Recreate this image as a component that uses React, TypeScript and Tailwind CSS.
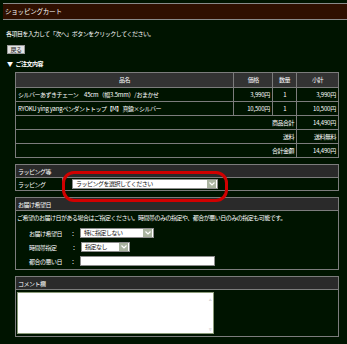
import React from "react";

const cell = "border border-[#7c7c7c] px-[2px] h-[14px] leading-none";
const num = "tracking-[-0.2px]";

function Arrow() {
    return (
        <span className="ml-auto flex h-[8px] w-[9px] items-center justify-center bg-[#aab4a0]">
            <svg width="6" height="4" viewBox="0 0 6 4">
                <path d="M0.5 0.5L3 3L5.5 0.5" fill="none" stroke="#fff" strokeWidth="1.2" />
            </svg>
        </span>
    );
}

function Select({ text, width }: { text: string; width: string }) {
    return (
        <div className={`flex h-[10px] items-center border border-[#8c8c8c] bg-white pl-[3px] pr-[1px] text-[#111] ${width}`}>
            <span className="leading-none">{text}</span>
            <Arrow />
        </div>
    );
}

function SectionHead({ title }: { title: string }) {
    return (
        <div className="flex h-[13px] items-center border-b border-[#7c7c7c] bg-[#2a2a2a] pl-[2px]">
            {title}
        </div>
    );
}

export default function App() {
    return (
        <div className="relative h-[344px] w-[347px] overflow-hidden bg-[#001400] pt-[3px] font-['Noto_Sans_CJK_JP','Noto_Sans',sans-serif] text-[6px] tracking-[-0.5px] text-white">
            {/* Title bar */}
            <div className="ml-[3px] flex h-[17px] items-center border-y border-[#8a8a8a] bg-[#2f0f00] pl-[2px] text-[6.5px] tracking-[-0.2px]">
                ショッピングカート
            </div>

            <p className="mt-[10px] h-[8px] pl-[6px] leading-[8px]">
                各項目を入力して「次へ」ボタンをクリックしてください。
            </p>

            <button className="ml-[7px] mt-[7px] flex h-[9px] w-[18px] items-center justify-center border border-[#999] bg-[#e4e4e4] text-[#111] leading-none">
                戻る
            </button>

            <div className="mt-[5px] flex h-[8px] items-center pl-[7px]">
                <span className="mr-[3px] text-[6px]">▼</span>
                <span className="font-bold">ご注文内容</span>
            </div>

            {/* Order table */}
            <table className="ml-[15px] mt-[5px] w-[324px] border-collapse border border-[#8c8c8c]">
                <colgroup>
                    <col className="w-[219px]" />
                    <col className="w-[39px]" />
                    <col className="w-[24px]" />
                    <col className="w-[42px]" />
                </colgroup>
                <thead>
                    <tr className="h-[15px] bg-[#333333]">
                        <th className={`${cell} font-normal`}>品名</th>
                        <th className={`${cell} font-normal`}>価格</th>
                        <th className={`${cell} font-normal`}>数量</th>
                        <th className={`${cell} font-normal`}>小計</th>
                    </tr>
                </thead>
                <tbody>
                    <tr>
                        <td className={`${cell} text-left`}>
                            シルバーあずきチェーン<span className={num}>　45cm（幅3.5mm）/</span>おまかせ
                        </td>
                        <td className={`${cell} text-right ${num}`}>3,990円</td>
                        <td className={`${cell} text-center`}>1</td>
                        <td className={`${cell} text-right ${num}`}>3,990円</td>
                    </tr>
                    <tr>
                        <td className={`${cell} text-left`}>
                            <span className={num}>RYOKU ying yang</span>ペンダントトップ【M】 真鍮×シルバー
                        </td>
                        <td className={`${cell} text-right ${num}`}>10,500円</td>
                        <td className={`${cell} text-center`}>1</td>
                        <td className={`${cell} text-right ${num}`}>10,500円</td>
                    </tr>
                    <tr>
                        <td colSpan={3} className={`${cell} text-right`}>商品合計</td>
                        <td className={`${cell} text-right ${num}`}>14,490円</td>
                    </tr>
                    <tr>
                        <td colSpan={3} className={`${cell} text-right`}>送料</td>
                        <td className={`${cell} text-right`}>送料無料</td>
                    </tr>
                    <tr>
                        <td colSpan={3} className={`${cell} text-right`}>合計金額</td>
                        <td className={`${cell} text-right ${num}`}>14,490円</td>
                    </tr>
                </tbody>
            </table>

            {/* Wrapping */}
            <div className="ml-[15px] mt-[6px] w-[324px] border border-[#7c7c7c]">
                <SectionHead title="ラッピング等" />
                <div className="flex h-[12px] items-center">
                    <div className="flex h-full w-[47px] items-center border-r border-[#7c7c7c] pl-[2px]">ラッピング</div>
                    <div className="ml-[9px]">
                        <Select text="ラッピングを選択してください" width="w-[146px]" />
                    </div>
                </div>
            </div>

            {/* Delivery date */}
            <div className="ml-[15px] mt-[6px] w-[324px] border border-[#7c7c7c]">
                <SectionHead title="お届け希望日" />
                <p className="mt-[3px] h-[8px] pl-[1px] leading-[8px]">
                    ご希望のお届け日がある場合はご指定ください。時間帯のみの指定や、都合が悪い日のみの指定も可能です。
                </p>
                <div className="mt-[6px] flex flex-col gap-[4px] pb-[3px] pl-[13px]">
                    <div className="flex items-center">
                        <span className="w-[41px]">お届け希望日</span>
                        <span className="w-[10px]">：</span>
                        <Select text="特に指定しない" width="w-[74px]" />
                    </div>
                    <div className="flex items-center">
                        <span className="w-[42px]">時間帯指定</span>
                        <span className="w-[10px]">：</span>
                        <Select text="指定なし" width="w-[49px]" />
                    </div>
                    <div className="flex items-center">
                        <span className="w-[41px]">都合の悪い日</span>
                        <span className="w-[10px]">：</span>
                        <div className="h-[10px] w-[135px] border border-[#8c8c8c] bg-white" />
                    </div>
                </div>
            </div>

            {/* Comment */}
            <div className="ml-[15px] mt-[6px] w-[324px] border border-[#7c7c7c]">
                <SectionHead title="コメント欄" />
                <div className="pb-[2px] pl-[1px] pt-[2px]">
                    <div className="relative h-[42px] w-[197px] border border-[#8a9a78] bg-white">
                        <span className="absolute right-[2px] top-[3px] text-[5px] leading-none text-[#aaa]">▵</span>
                        <span className="absolute bottom-[2px] right-[2px] text-[5px] leading-none text-[#aaa]">▿</span>
                    </div>
                </div>
            </div>

            {/* Highlight ring around the wrapping select */}
            <div className="absolute left-[62px] top-[171px] h-[31px] w-[166px] rounded-[12px] border-[3px] border-[#d00000]" />
        </div>
    );
}
